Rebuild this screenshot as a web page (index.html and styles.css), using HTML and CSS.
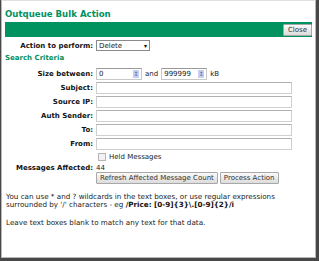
FILE: index.html
```html
<!DOCTYPE html>
<html lang="en">
<head>
    <meta charset="UTF-8">
    <title>Outqueue Bulk Action</title>
    <link rel="stylesheet" href="styles.css">
</head>
<body>
    <div class="dialog">
        <h1 class="title">Outqueue Bulk Action</h1>
        <div class="bar">
            <button class="btn">Close</button>
        </div>

        <div class="form">
            <label class="lbl">Action to perform:</label>
            <div class="field">
                <span class="select">Delete<span class="arrow">&#9662;</span></span>
            </div>
        </div>

        <h2 class="section">Search Criteria</h2>

        <div class="form criteria">
            <label class="lbl">Size between:</label>
            <div class="field">
                <span class="num"><span class="num-val">0</span><span class="spin">&#8597;</span></span>
                <span class="txt">and</span>
                <span class="num"><span class="num-val">999999</span><span class="spin">&#8597;</span></span>
                <span class="txt">kB</span>
            </div>

            <label class="lbl">Subject:</label>
            <div class="field"><input class="text" type="text"></div>

            <label class="lbl">Source IP:</label>
            <div class="field"><input class="text" type="text"></div>

            <label class="lbl">Auth Sender:</label>
            <div class="field"><input class="text" type="text"></div>

            <label class="lbl">To:</label>
            <div class="field"><input class="text" type="text"></div>

            <label class="lbl">From:</label>
            <div class="field"><input class="text" type="text"></div>

            <span></span>
            <div class="field check-row">
                <span class="check"></span>
                <span class="txt">Held Messages</span>
            </div>

            <label class="lbl">Messages Affected:</label>
            <div class="field"><span class="txt">44</span></div>

            <span></span>
            <div class="field buttons">
                <button class="btn">Refresh Affected Message Count</button>
                <button class="btn">Process Action</button>
            </div>
        </div>

        <p class="note first">You can use * and ? wildcards in the text boxes, or use regular expressions<br>
        surrounded by '/' characters - eg <b>/Price: [0-9]{3}\.[0-9]{2}/i</b></p>
        <p class="note">Leave text boxes blank to match any text for that data.</p>
    </div>
</body>
</html>
```

FILE: styles.css
```css
/* base */
html, body {
    height: 100%;
}
body {
    margin: 0;
    background: #484848;
    font-family: "DejaVu Sans", Verdana, sans-serif;
    font-size: 7px;
    color: #222;
}

/* dialog window */
.dialog {
    box-sizing: border-box;
    height: calc(100% - 3px);
    margin: 0 3px 0 1px;
    background: #fff;
    border: 1px solid #b8b8b8;
    border-top-color: #e0e0e0;
    padding: 0 3px;
}

.title {
    margin: 0;
    padding: 8px 0 0 0;
    height: 13px;
    font-size: 8.6px;
    font-weight: bold;
    color: #00915f;
}

.bar {
    height: 15px;
    background: #00925f;
    display: flex;
    justify-content: flex-end;
    align-items: center;
}

.btn {
    font-family: inherit;
    font-size: 7px;
    color: #333;
    height: 12px;
    padding: 0 3px;
    margin: 0;
    background: linear-gradient(#fafafa, #dcdcdc);
    border: 1px solid #a8a8a8;
    border-radius: 1px;
}
.bar .btn {
    padding: 0 4px;
}

/* form grid */
.form {
    display: grid;
    grid-template-columns: 88px 1fr;
    column-gap: 3px;
    align-items: center;
    margin-top: 3px;
}
.criteria {
    margin-top: 6px;
    row-gap: 2px;
}
.lbl {
    font-weight: bold;
    text-align: right;
    color: #111;
}
.field {
    display: flex;
    align-items: center;
    gap: 3px;
}

.select {
    box-sizing: border-box;
    width: 54px;
    height: 11px;
    padding: 0 2px;
    border: 1px solid #8a8a8a;
    background: #fff;
    color: #222;
    display: flex;
    align-items: center;
    justify-content: space-between;
}
.arrow {
    font-size: 6px;
    color: #000;
}

.section {
    margin: 3px 0 0 0;
    font-size: 7px;
    font-weight: bold;
    color: #00915f;
}

.num {
    box-sizing: border-box;
    width: 46px;
    height: 12px;
    border: 1px solid #c8c8c8;
    border-top-color: #9a9a9a;
    display: flex;
    align-items: center;
    justify-content: space-between;
    padding-left: 2px;
}
.spin {
    width: 6px;
    height: 8px;
    margin-right: 2px;
    background: #c7cff0;
    color: #5566aa;
    font-size: 6px;
    line-height: 8px;
    text-align: center;
}

.text {
    box-sizing: border-box;
    width: 196px;
    height: 12px;
    margin: 0;
    border: 1px solid #cfcfcf;
    border-top-color: #b0b0b0;
}

.check-row {
    height: 10px;
    padding-left: 2px;
}
.check {
    width: 6px;
    height: 6px;
    border: 1px solid #b5b5b5;
    background: #f2f2f2;
}

.buttons {
    gap: 2px;
    margin-top: -2px;
}

.note {
    margin: 10px 0 0 1px;
    font-size: 7.2px;
    line-height: 8px;
    color: #222;
}
.note.first {
    margin-top: 9px;
}
.note b {
    color: #111;
}
```
